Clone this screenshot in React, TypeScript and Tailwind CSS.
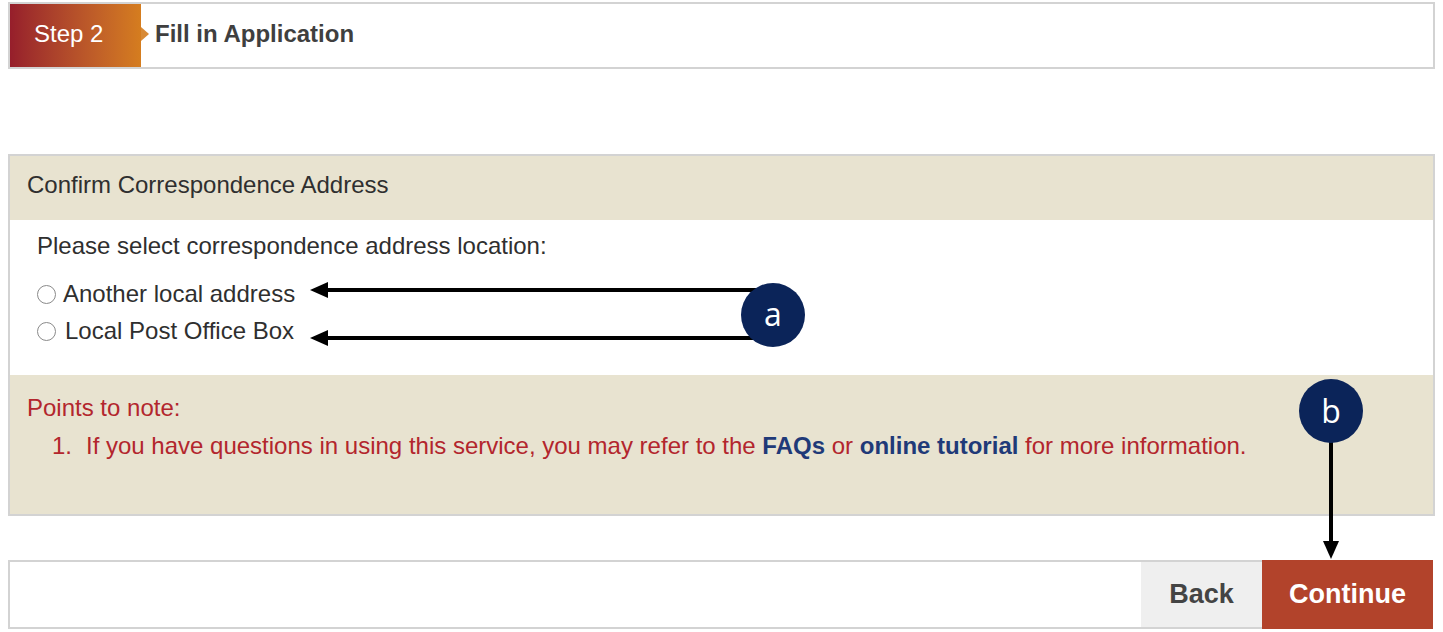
import React from "react";

function Radio() {
  return (
    <span className="inline-block w-[19px] h-[19px] rounded-full border border-[#8a8a8a] bg-white shrink-0" />
  );
}

export default function App() {
  return (
    <div className="relative w-[1443px] h-[632px] bg-white overflow-hidden font-['Liberation_Sans',Arial,sans-serif]">
      {/* Step bar */}
      <div className="mx-[8px] mt-[2px] h-[67px] border-2 border-[#d3d3d3] flex items-stretch">
        <div className="w-[131px] bg-gradient-to-r from-[#961e2b] to-[#d57d1f] flex items-center pl-[24px] pb-[4px] text-white text-[24px]">
          Step 2
        </div>
        <div className="flex items-center pb-[4px]">
          <span className="block w-0 h-0 border-y-[7px] border-y-transparent border-l-[8px] border-l-[#d88a36]" />
        </div>
        <div className="flex items-center pl-[6px] pb-[4px] text-[24px] font-bold text-[#3f3f3f]">
          Fill in Application
        </div>
      </div>

      {/* Panel */}
      <div className="mx-[8px] mt-[85px] h-[362px] border-2 border-[#d3d3d3] flex flex-col">
        <div className="h-[64px] bg-[#e8e3d0] flex items-center pl-[17px] pb-[6px] text-[24px] text-[#2f2f2f]">
          Confirm Correspondence Address
        </div>
        <div className="h-[155px] bg-white pl-[27px] pt-[11px] text-[24px] text-[#2f2f2f]">
          <div className="leading-[30px]">Please select correspondence address location:</div>
          <div className="mt-[18px] flex items-center gap-[7px] leading-[30px]">
            <Radio />
            <span>Another local address</span>
          </div>
          <div className="mt-[7px] flex items-center gap-[9px] leading-[30px]">
            <Radio />
            <span>Local Post Office Box</span>
          </div>
        </div>
        <div className="flex-1 bg-[#e8e3d0] pl-[17px] pt-[18px] text-[24px] text-[#b3262d]">
          <div className="leading-[30px]">Points to note:</div>
          <div className="mt-[8px] flex leading-[30px] pl-[25px]">
            <span className="w-[34px]">1.</span>
            <span>
              If you have questions in using this service, you may refer to the{" "}
              <span className="font-bold text-[#1f3a78]">FAQs</span> or{" "}
              <span className="font-bold text-[#1f3a78]">online tutorial</span> for more information.
            </span>
          </div>
        </div>
      </div>

      {/* Bottom bar */}
      <div className="ml-[8px] mr-[10px] mt-[44px] h-[69px] border-2 border-r-0 border-[#d3d3d3] flex justify-end">
        <div className="w-[121px] bg-[#efefef] flex items-center justify-center text-[27px] font-bold text-[#444]">
          Back
        </div>
        <div className="w-[171px] -my-[2px] bg-[#b2432b] flex items-center justify-center text-[27px] font-bold text-white">
          Continue
        </div>
      </div>

      {/* Annotations */}
      <svg className="absolute left-0 top-0 pointer-events-none" width="1443" height="632" viewBox="0 0 1443 632">
        <line x1="760" y1="290" x2="326" y2="290" stroke="#000" strokeWidth="4" />
        <polygon points="310,290 328,282 328,298" fill="#000" />
        <line x1="760" y1="338" x2="326" y2="338" stroke="#000" strokeWidth="4" />
        <polygon points="310,338 328,330 328,346" fill="#000" />
        <circle cx="773" cy="315" r="32" fill="#0b2459" />
        <text x="773" y="326" textAnchor="middle" fill="#fff" fontSize="32" fontFamily="'Open Sans', 'Liberation Sans', sans-serif">a</text>

        <line x1="1331" y1="440" x2="1331" y2="544" stroke="#000" strokeWidth="4" />
        <polygon points="1331,559 1323,541 1339,541" fill="#000" />
        <circle cx="1331" cy="411" r="32" fill="#0b2459" />
        <text x="1331" y="423" textAnchor="middle" fill="#fff" fontSize="32" fontFamily="'Open Sans', 'Liberation Sans', sans-serif">b</text>
      </svg>
    </div>
  );
}
